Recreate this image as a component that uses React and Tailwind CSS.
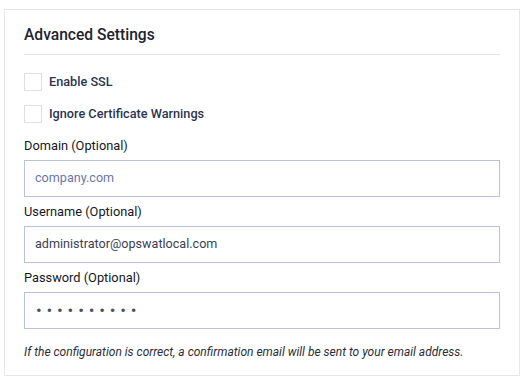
import React from "react";

const Checkbox = ({ label }) => (
  <label className="flex items-center h-[18px] gap-[7px]">
    <span className="w-[18px] h-[18px] border border-[#dcdfe6] bg-white" />
    <span className="text-[12.7px] font-medium text-[#2c3550]">{label}</span>
  </label>
);

const Field = ({ label, children }) => (
  <div className="flex flex-col">
    <div className="h-[21px] flex items-center text-[12.8px] font-normal text-[#15171f] mb-[4px]">
      {label}
    </div>
    <div className="h-[37px] border border-[#b8c2dc] flex items-center px-[10px] text-[12.6px]">
      {children}
    </div>
  </div>
);

export default function App() {
  return (
    <div className="w-[525px] h-[381px] bg-white pt-[9px] pl-[4px] font-['Roboto',sans-serif]">
      <div className="w-[516px] h-[367px] border border-[#e6e7ea] px-[19px] flex flex-col">
        <div className="h-[45px] flex items-end pb-[10px] border-b border-[#e4e5ea]">
          <h2 className="text-[15.6px] font-medium text-[#20232d] leading-none">Advanced Settings</h2>
        </div>
        <div className="mt-[18px] flex flex-col gap-[14px]">
          <Checkbox label="Enable SSL" />
          <Checkbox label="Ignore Certificate Warnings" />
        </div>
        <div className="mt-[12px] flex flex-col gap-[4px]">
          <Field label="Domain (Optional)">
            <span className="text-[#6a78a5]">company.com</span>
          </Field>
          <Field label="Username (Optional)">
            <span className="text-[#3c4154]">administrator@opswatlocal.com</span>
          </Field>
          <Field label="Password (Optional)">
            <span className="text-[#4a4f60] tracking-[4.8px] text-[17px] ml-[1px]">••••••••••</span>
          </Field>
        </div>
        <p className="mt-[14px] text-[12px] italic text-[#2a2d38]">
          If the configuration is correct, a confirmation email will be sent to your email address.
        </p>
      </div>
    </div>
  );
}
